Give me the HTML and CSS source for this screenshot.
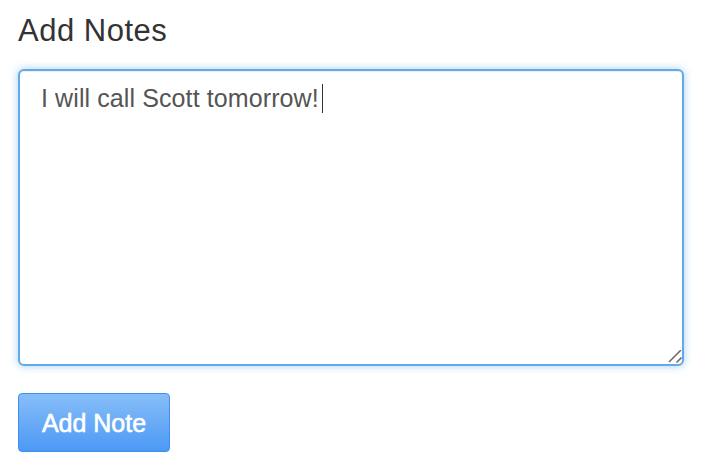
FILE: index.html
```html
<!DOCTYPE html>
<html lang="en">
<head>
<meta charset="utf-8">
<title>Add Notes</title>
<link rel="stylesheet" href="styles.css">
</head>
<body>
<main class="notes">
  <h3 class="notes-title">Add Notes</h3>
  <div class="note-input" role="textbox" aria-multiline="true">I will call Scott tomorrow!<span class="caret"></span>
    <svg class="grip" width="14" height="14" viewBox="0 0 14 14" aria-hidden="true">
      <line x1="1" y1="12" x2="13" y2="0" />
      <line x1="8.5" y1="12.5" x2="13.5" y2="7.5" />
    </svg>
  </div>
  <button class="btn-add" type="button">Add Note</button>
</main>
</body>
</html>
```
FILE: styles.css
```css
html, body {
  margin: 0;
  padding: 0;
  background: #fff;
}
body {
  font-family: "Liberation Sans", Arial, sans-serif;
}
.notes {
  padding: 14px 22px 0 18px;
  display: flex;
  flex-direction: column;
  align-items: flex-start;
}
.notes-title {
  margin: 0;
  font-size: 31px;
  line-height: 34px;
  font-weight: normal;
  letter-spacing: 0.5px;
  color: #333;
}
.note-input {
  position: relative;
  box-sizing: border-box;
  margin-top: 21px;
  width: 666px;
  height: 297px;
  padding: 9px 21px;
  border: 2px solid #62aaea;
  border-radius: 6px;
  box-shadow: inset 0 1px 1px rgba(0,0,0,.075), 0 0 8px rgba(102,175,233,.6);
  font-size: 25px;
  line-height: 36px;
  letter-spacing: 0.1px;
  color: #555;
  background: #fff;
}
.caret {
  display: inline-block;
  width: 1px;
  height: 29px;
  margin-left: 3px;
  background: #333;
  vertical-align: -6px;
}
.grip {
  position: absolute;
  right: 0;
  bottom: 0;
  stroke: #6b6b6b;
  stroke-width: 1.6;
}
.btn-add {
  margin-top: 27px;
  box-sizing: border-box;
  height: 59px;
  width: 152px;
  padding: 0;
  border: 1px solid #3f8ef0;
  border-radius: 4px;
  background: linear-gradient(to bottom, #87bef9, #4c99f5);
  color: #fff;
  font-family: "Liberation Sans", Arial, sans-serif;
  font-size: 25px;
  line-height: 59px;
  -webkit-text-stroke: 0.6px #fff;
}
```
